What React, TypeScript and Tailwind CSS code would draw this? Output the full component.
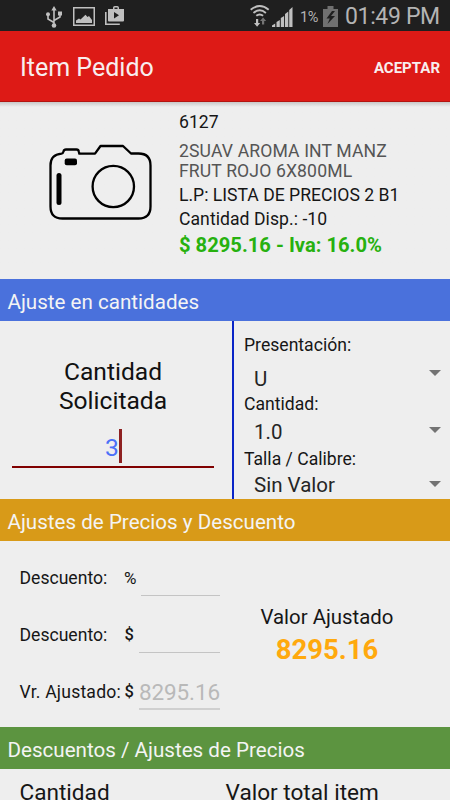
import React from "react";

function StatusBar() {
  return (
    <div className="flex h-[31px] shrink-0 items-center bg-[#1f1f1f] text-[#b4b4b4]">
      <svg className="ml-[45px] mt-[2px] h-[22px] w-[18px]" viewBox="0 0 18 22" fill="none" stroke="#c0c0c0" strokeWidth="1.6">
        <path d="M9 3v16M9 16.500 3 13V9M9 14.500l6-3.500V8" />
        <path d="M9 0 6.300 4.500h5.400z" fill="#c0c0c0" stroke="none" />
        <circle cx="9" cy="19.500" r="2.300" fill="#c0c0c0" stroke="none" />
        <circle cx="3" cy="8.300" r="2" fill="#c0c0c0" stroke="none" />
        <path d="M13 5.500h4v4h-4z" fill="#c0c0c0" stroke="none" />
      </svg>
      <svg className="ml-[10px] mt-[2px] h-[19px] w-[22px]" viewBox="0 0 22 19">
        <path d="M0.750 0.750h20.500v17.500H0.750z" fill="none" stroke="#c0c0c0" strokeWidth="1.500" />
        <path d="M3 16v-2.500l3-2 1.500 1 5-4.800 2 2.300 1.500-1L19 13v3z" fill="#c0c0c0" />
      </svg>
      <svg className="ml-[10px] h-[19px] w-[19px]" viewBox="0 0 19 19">
        <path d="M0.800 6v12.200h14" fill="none" stroke="#c0c0c0" strokeWidth="1.600" />
        <path fillRule="evenodd" fill="#c0c0c0" d="M3 3h5V1.800Q8 0 9.800 0h2.400Q14 0 14 1.800V3h5v11.500q0 1-1 1H4q-1 0-1-1zM9.500 3h3V1.500h-3zM9 6v6.500l5-3.200z" />
      </svg>
      <svg className="ml-[126px] mt-[1px] h-[22px] w-[20px]" viewBox="0 0 20 22" fill="none" stroke="#c0c0c0" strokeWidth="1.900">
        <path d="M0.700 4.800Q9.700-2.600 18.700 4.800M3.500 7.900q6.200-5.200 12.400 0M6.300 10.800q3.400-2.800 6.800 0" />
        <path d="M6 14h2.200v4h2L7.100 21.700 4 18h2z" fill="#c0c0c0" stroke="none" />
        <path d="M12 19.500h2.200V16h2l-3.100-3.500L10 16h2z" fill="#737373" stroke="none" />
      </svg>
      <svg className="ml-[2px] mt-[2px] h-[20px] w-[21px]" viewBox="0 0 21 20" fill="#c0c0c0">
        <path d="M0 20v-1.500l3.200-2V20zM4.500 20v-5l3.300-2v7zM8.800 20v-9l3.300-2v11zM13 20V7l3.300-2.500V20zM17.200 20V3L20.500 0v20z" />
      </svg>
      <span className="ml-[7px] mt-[4px] w-[20px] whitespace-nowrap text-[14.500px] tracking-[-0.4px]">1%</span>
      <svg className="ml-[3px] mt-[1px] h-[21px] w-[15px]" viewBox="0 0 15 21">
        <path d="M0 3h4.500V0h6v3H15v18H0z" fill="#707070" />
        <path d="M9 5 3.500 12.500h3.300L4.500 18 12 10H8l4-5z" fill="#1f1f1f" />
      </svg>
      <span className="ml-[7px] mt-[3px] whitespace-nowrap text-[23px] tracking-[-0.35px]">01:49 PM</span>
    </div>
  );
}

function SectionTitle({ className, children }: { className: string; children: React.ReactNode }) {
  return (
    <h2 className={"flex h-[42px] shrink-0 items-center pt-[4px] pr-2 pl-[7.500px] text-[20.600px] leading-[38px] font-normal text-[#f4f4f4] whitespace-nowrap " + className}>
      {children}
    </h2>
  );
}

function Camera() {
  return (
    <svg className="mt-[42px] ml-[49px] h-[78px] w-[104px] shrink-0" viewBox="0 0 104 78" fill="none" stroke="#000" strokeWidth="2.300">
      <path d="M12.500 9.700Q14 9.500 14.500 7.500 15 5.500 17 5.500h10.500q2 0 2.300 2l.5 2.200H46L51.500 2H74l8 7.500h7.500q12 0 12 12v41q0 12-12 12h-76q-12 0-12-12v-41q0-11 11-11.800z" strokeLinejoin="round" />
      <circle cx="64.300" cy="42.500" r="20.700" />
      <rect x="15.700" y="14.500" width="12.300" height="6.800" rx="2" fill="#000" stroke="none" />
      <path d="M10 31.500v27" strokeWidth="5" strokeLinecap="round" />
    </svg>
  );
}

function Product() {
  return (
    <section className="flex h-[177px] shrink-0 bg-gradient-to-b from-[#c8c8c8] via-[#eee] via-[5px] to-[#eee]">
      <Camera />
      <div className="ml-[26px] pt-[10px] text-[17.600px] leading-[20px] whitespace-nowrap text-[#161616]">
        <p>6127</p>
        <p className="mt-[9px] tracking-[0.13px] text-[#555]">2SUAV AROMA INT MANZ<br />FRUT ROJO 6X800ML</p>
        <p className="mt-[4px]">L.P: LISTA DE PRECIOS 2 B1</p>
        <p className="mt-[4px] tracking-[0.05px]">Cantidad Disp.: -10</p>
        <p className="mt-[6px] text-[20.200px] font-bold text-[#27b10f]">$ 8295.16 - Iva: 16.0%</p>
      </div>
    </section>
  );
}

function Select({ className, arrow, children }: { className: string; arrow: string; children: React.ReactNode }) {
  return (
    <div className={"flex items-center justify-between pr-[9px] pl-[10px] text-[20.500px] text-[#252525] " + className}>
      <span>{children}</span>
      <svg className={"h-[6px] w-[12px] " + arrow} viewBox="0 0 12 6"><path d="M0 0h12L6 6z" fill="#737373" /></svg>
    </div>
  );
}

function Quantities() {
  return (
    <section className="flex h-[178px] shrink-0">
      <div className="flex w-[232px] flex-col items-center pt-[36px] pr-[6px] text-[24.600px] leading-[29px] text-[#111]">
        <p>Cantidad</p>
        <p>Solicitada</p>
        <div className="mt-[14px] flex h-[39px] w-[202px] justify-center border-b-2 border-[#800000] text-[#4b70f8]">
          <span className="mt-[4px] ml-px">3</span>
          <span className="h-[34px] w-[3px] bg-[#8e2020]" />
        </div>
      </div>
      <div className="flex-1 border-l-2 border-[#0924c7] pt-[14px] pl-[10px] text-[17.600px] leading-[20px] text-[#161616]">
        <p>Presentación:</p>
        <Select className="h-[39px] pt-[8px]" arrow="-mt-[11px]">U</Select>
        <p>Cantidad:</p>
        <Select className="h-[35px]" arrow="-mt-[3px]">1.0</Select>
        <p>Talla / Calibre:</p>
        <Select className="h-[32px]" arrow="-mt-[2px]">Sin Valor</Select>
      </div>
    </section>
  );
}

function Prices() {
  return (
    <section className="flex h-[186px] shrink-0 text-[#161616]">
      <div className="ml-[19.500px] w-[200.500px] pt-[27px] text-[17.600px] leading-[20px] whitespace-nowrap">
        <div className="flex h-[57px]">
          <span className="w-[104.500px]">Descuento:</span><span className="w-[17px] text-[17px]">%</span>
          <span className="h-[28px] flex-1 border-b border-[#c4c4c4]" />
        </div>
        <div className="flex h-[57px]">
          <span className="w-[105px]">Descuento:</span><span className="w-[14.500px] text-[16.500px] font-medium">$</span>
          <span className="h-[28px] flex-1 border-b border-[#c4c4c4]" />
        </div>
        <div className="flex h-[57px]">
          <span className="w-[106px] tracking-[0.2px]">Vr. Ajustado:</span><span className="w-[14.500px] text-[16.500px] font-medium">$</span>
          <span className="h-[28px] flex-1 border-b-2 border-[#d0d0d0] text-[22.500px] tracking-[-0.1px] text-[#b9b9b9]">8295.16</span>
        </div>
      </div>
      <div className="ml-[13px] flex flex-1 flex-col items-center pt-[61px] pr-[29px]">
        <span className="text-[20.400px] leading-[30px]">Valor Ajustado</span>
        <span className="text-[27.500px] leading-[36px] font-bold text-[#ffa90d]">8295.16</span>
      </div>
    </section>
  );
}

export default function App() {
  return (
    <main className="flex h-[800px] w-[450px] flex-col overflow-hidden bg-[#eee] font-['Roboto',sans-serif]">
      <StatusBar />
      <header className="flex h-[71px] shrink-0 items-center justify-between border-b border-[#b41410] bg-[#dd1a16] pt-[4px] pr-[10px] pl-[20px] text-[#f8eeee]">
        <h1 className="text-[25px] font-normal">Item Pedido</h1>
        <button className="text-[15px] font-bold">ACEPTAR</button>
      </header>
      <Product />
      <SectionTitle className="bg-[#4a71dc]">Ajuste en cantidades</SectionTitle>
      <Quantities />
      <SectionTitle className="bg-[#d89a18]">Ajustes de Precios y Descuento</SectionTitle>
      <Prices />
      <SectionTitle className="bg-[#5c9440]">Descuentos / Ajustes de Precios</SectionTitle>
      <section className="flex pt-[9px] pl-[19.500px] text-[22.600px] leading-[30px] whitespace-nowrap text-[#161616]">
        <span className="w-[206px]">Cantidad</span>
        <span>Valor total item</span>
      </section>
    </main>
  );
}
